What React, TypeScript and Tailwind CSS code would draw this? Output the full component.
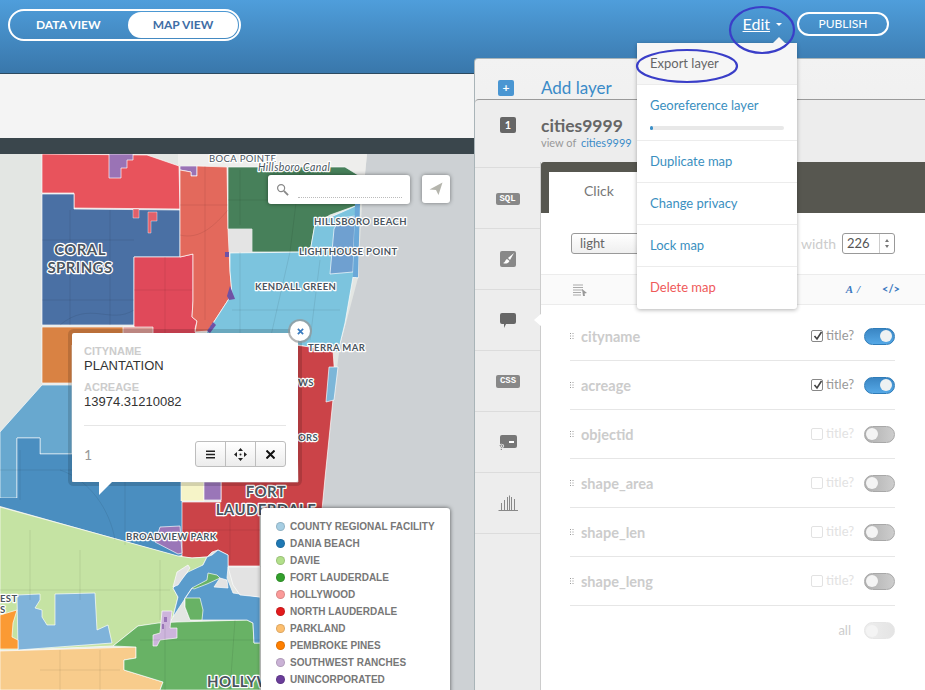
import React from "react";

const poly = (c: string, p: string, s = "#ffffffaa") => <polygon fill={c} points={p} stroke={s} strokeWidth={1} />;

function L({ x, y, s = 10, t, a = "start", i = false, w = 700 }: { x: number; y: number; s?: number; t: string; a?: "start" | "middle"; i?: boolean; w?: number }) {
  return (
    <text x={x} y={y} fontSize={s} textAnchor={a} fontStyle={i ? "italic" : "normal"} fontWeight={w} fill="#4a5560" stroke="#ffffff" strokeWidth={2.5} strokeLinejoin="round" className="[font-family:Lato,sans-serif] [paint-order:stroke] tracking-[0.4px]">
      {t}
    </text>
  );
}

function MapArt() {
  return (
    <svg viewBox="0 154 475 536" width={475} height={536} className="block">
      <rect x="0" y="154" width="475" height="536" fill="#e3e6e3" />
      <polygon fill="#cdd1d4" points="367,154 475,154 475,690 320,690 322,510 333,400 340,345 346,323 358,278 362,205" />
      <polygon fill="#eeeeec" points="178,154 367,154 362,205 340,167 228,167 178,165" />
      {poly("#e8535c", "42,154 147,155 179,166 180,209 74,208 74,193 42,193")}
      {poly("#9a73b5", "109,154 133,154 133,160 127,160 127,168 121,168 121,178 109,178")}
      {poly("#9a73b5", "180,166 197,166 197,176 191,176 191,172 180,170")}
      {poly("#4a70a4", "42,194 74,194 74,209 180,210 180,257 134,257 134,325 42,325")}
      {poly("#e0606a", "133,209 139,209 139,218 133,218", "#ffffff66")}
      {poly("#e0606a", "148,212 157,212 157,221 151,221 151,233 148,233", "#ffffff66")}
      {poly("#e0495a", "134,257 180,257 193,254 193,301 192,317 197,321 195,329 197,340 134,340")}
      {poly("#e3695c", "180,170 191,172 191,176 197,176 197,166 227,167 228,229 230,271 232,294 208,331 195,332 197,321 192,317 193,301 193,254 180,257")}
      {poly("#47805a", "228,167 345,167 358,175 358,205 330,215 315,224 310,252 252,252 252,229 228,229")}
      <rect x="229" y="229" width="23" height="23" fill="#e4e4e4" />
      {poly("#7cc4de", "230,253 310,252 315,224 358,205 358,278 353,277 345,323 338,352 298,345 200,340 208,331 232,294 230,271")}
      {poly("#6fa0d0", "334,229 340,218 355,216 353,272 330,274")}
      <polygon fill="#6aa8d8" points="355,204 360,204 358,277 353,277" />
      <polygon fill="#6f51a5" points="230,286 235,299 229,300 227,296" />
      <polygon fill="#6f51a5" points="207,331 213,322 216,325 210,333" />
      <rect x="225" y="252" width="4" height="5" fill="#6f51a5" />
      {poly("#d98243", "42,327 135,327 125,345 72,345 72,383 42,383")}
      {poly("#db9d97", "123,327 153,327 153,335 123,335")}
      {poly("#68a8cf", "0,432 42,385 72,385 72,454 40,454 40,438 17,438 17,498 0,498")}
      <polygon fill="#4a8ec0" points="17,438 40,438 40,454 72,454 72,482 182,482 182,555 178,556 0,506 0,498 17,498" />
      <path d="M17 438 H40 V454 H72 M17 438 V498" fill="none" stroke="#ffffff88" strokeWidth="1" />
      {poly("#cb4348", "295,345 333,350 335,380 325,478 322,510 260,510 260,566 228,566 228,555 218,550 212,552 207,557 192,558 182,557 182,502 221,502 221,482 298,482")}
      {poly("#7cb6d8", "329,367 338,367 334,400 326,402")}
      {poly("#f6f4c8", "181,482 204,482 204,501 181,501")}
      {poly("#9a76b8", "204,482 221,482 221,500 204,500")}
      {poly("#9a76b8", "155,542 160,527 180,526 182,553 178,554")}
      {poly("#c5e3a3", "0,507 178,556 192,558 207,557 203,565 173,588 178,597 173,617 170,622 138,626 113,646 18,650 0,650")}
      {poly("#7fb3da", "17,595 40,594 40,600 35,608 42,610 42,617 47,625 55,625 55,594 95,593 97,630 108,625 112,643 18,650")}
      {poly("#fb9a34", "0,615 17,610 13,623 12,637 18,640 18,649 0,649")}
      {poly("#f8cc8c", "0,651 136,647 136,658 124,660 124,670 163,682 160,690 0,690")}
      {poly("#68b265", "113,646 138,626 158,623 177,622 247,620 253,623 254,643 260,643 260,690 160,690 163,682 124,670 124,660 136,658 136,647")}
      {poly("#5a9ccc", "173,617 178,597 173,588 188,572 203,565 207,557 212,555 218,550 228,555 228,567 227,578 233,593 260,597 260,643 254,643 253,623 247,620 190,620 185,607 185,598 192,588")}
      {poly("#e3e3e3", "173,587 177,572 188,565 190,568 178,585")}
      {poly("#e3e3e3", "228,567 260,567 260,597 240,595 233,585")}
      {poly("#e3e3e3", "214,587 220,578 227,580 228,588")}
      {poly("#68b265", "192,588 207,580 208,573 217,575 220,578 207,584 194,589")}
      {poly("#68b265", "185,598 200,598 203,610 202,620 190,620 185,607")}
      {poly("#cdb5dc", "162,611 172,611 170,628 177,628 177,638 160,640 157,646 153,646 153,635 160,633")}
      <rect x="164" y="617" width="3" height="5" fill="#9a76b8" />
      <rect x="162" y="624" width="2" height="5" fill="#9a76b8" />
      <g fill="none" stroke="#00000014" strokeWidth="1">
        <path d="M42 240 H134 M70 210 V325 M110 210 V325 M42 300 H134 M60 325 C90 300 110 325 134 310" />
        <path d="M180 205 H228 M205 166 V320 M180 235 C200 240 215 225 228 210 M134 290 H192 M165 257 V340" />
        <path d="M240 170 V225 M228 200 H345 M300 170 L290 252 M290 252 L270 340 M240 252 V340 M232 310 H340 M320 260 L310 340" />
        <path d="M20 450 V500 M60 470 C90 480 110 510 115 540 M125 482 L125 545 M0 470 H170 M182 530 H260 M230 510 V560" />
        <path d="M30 530 V600 M80 550 V600 M0 590 H170 M160 560 V620 M40 670 H120 M60 650 V690 M100 650 V690" />
        <path d="M140 640 H260 M165 625 V690 M235 620 L230 690" />
      </g>
      <L x={209} y={162} t="BOCA POINTE" s={9.5} w={400} />
      <L x={258} y={171} t="Hillsboro Canal" s={10.5} i w={400} />
      <L x={314} y={225} t="HILLSBORO BEACH" s={9.5} />
      <L x={299} y={255} t="LIGHTHOUSE POINT" s={9.5} />
      <L x={255} y={290} t="KENDALL GREEN" s={9.5} />
      <L x={80} y={255} t="CORAL" s={15} a="middle" />
      <L x={80} y={273} t="SPRINGS" s={15} a="middle" />
      <L x={308} y={351} t="TERRA MAR" s={9.5} />
      <L x={298} y={386} t="WS" s={9.5} />
      <L x={298} y={441} t="ORS" s={9.5} />
      <L x={266} y={497} t="FORT" s={15} a="middle" />
      <L x={266} y={515} t="LAUDERDALE" s={15} a="middle" />
      <L x={126} y={540} t="BROADVIEW PARK" s={9.5} />
      <L x={0} y={602} t="EST" s={9.5} />
      <L x={0} y={613} t="S" s={9.5} />
      <L x={207} y={687} t="HOLLYW" s={15} />
    </svg>
  );
}

const legend: [string, string][] = [
  ["#a6cee3", "COUNTY REGIONAL FACILITY"],
  ["#1f78b4", "DANIA BEACH"],
  ["#b2df8a", "DAVIE"],
  ["#33a02c", "FORT LAUDERDALE"],
  ["#fb9a99", "HOLLYWOOD"],
  ["#e31a1c", "NORTH LAUDERDALE"],
  ["#fdbf6f", "PARKLAND"],
  ["#ff7f00", "PEMBROKE PINES"],
  ["#cab2d6", "SOUTHWEST RANCHES"],
  ["#6a3d9a", "UNINCORPORATED"],
];

const fields: [string, boolean][] = [
  ["cityname", true],
  ["acreage", true],
  ["objectid", false],
  ["shape_area", false],
  ["shape_len", false],
  ["shape_leng", false],
];

function Toggle({ on, faint = false }: { on: boolean; faint?: boolean }) {
  if (on) {
    return (
      <div className="flex h-[17px] w-[31px] items-center justify-end rounded-full border border-[#2f7cb8] bg-gradient-to-b from-[#3a86c4] to-[#55a8e6] pr-[2px]">
        <div className="h-[12px] w-[12px] rounded-full bg-[#eef1f2]" />
      </div>
    );
  }
  return (
    <div className={faint ? "flex h-[17px] w-[31px] items-center rounded-full border border-[#e6e6e6] bg-gradient-to-r from-[#eeeeee] to-[#e4e4e4] pl-[1px]" : "flex h-[17px] w-[31px] items-center rounded-full border border-[#a8a8a8] bg-gradient-to-r from-[#b0b0b0] to-[#cdcdcd] pl-[1px]"}>
      <div className="h-[12px] w-[12px] rounded-full bg-[#f4f4f4]" />
    </div>
  );
}

function Check({ on }: { on: boolean }) {
  return (
    <div className={on ? "relative h-[12px] w-[12px] rounded-[2px] border border-[#888888] bg-white" : "h-[12px] w-[12px] rounded-[2px] border border-[#e2e2e2] bg-white"}>
      {on && (
        <svg viewBox="0 0 12 12" className="absolute left-0 top-[-1px] h-[12px] w-[12px]">
          <path d="M2.5 6 L5 9 L9.5 2" fill="none" stroke="#444444" strokeWidth="1.6" />
        </svg>
      )}
    </div>
  );
}

function SideRow({ children, h = "h-[61px]" }: { children?: React.ReactNode; h?: string }) {
  return <div className={`${h} flex items-center justify-center border-b border-[#dcdcdc]`}>{children}</div>;
}

function Grip() {
  return (
    <svg viewBox="0 0 4 6" className="h-[6px] w-[4px]">
      <g fill="#999999">
        <rect x="0" y="0" width="1" height="1" /><rect x="2.5" y="0" width="1" height="1" />
        <rect x="0" y="2.5" width="1" height="1" /><rect x="2.5" y="2.5" width="1" height="1" />
        <rect x="0" y="5" width="1" height="1" /><rect x="2.5" y="5" width="1" height="1" />
      </g>
    </svg>
  );
}

function Menu({ t, tall = false, red = false, active = false, last = false }: { t: string; tall?: boolean; red?: boolean; active?: boolean; last?: boolean }) {
  const color = active ? "text-[#666666] bg-[#f6f6f6]" : red ? "text-[#ef5a5a]" : "text-[#3a8fc0]";
  return (
    <div className={`${tall ? "h-[56px]" : "h-[42px]"} ${last ? "" : "border-b border-[#ececec]"} ${color} px-[13px] pt-[12px] text-[13px] leading-[17px]`}>
      <div>{t}</div>
      {tall && (
        <div className="mt-[12px] h-[4px] w-[134px] rounded-full bg-[#e8e8e8]">
          <div className="h-[4px] w-[3px] rounded-full bg-[#3a8fc8]" />
        </div>
      )}
    </div>
  );
}

export default function App() {
  return (
    <div className="relative flex h-[690px] w-[925px] flex-col overflow-hidden bg-white [font-family:Lato,sans-serif]">
      <header className="flex h-[74px] items-start justify-between border-b border-[#2c4a60] bg-gradient-to-b from-[#4f9edb] to-[#3977ab] pl-[8px] pr-[36px] pt-[9px]">
        <div className="flex h-[32px] w-[233px] items-center rounded-full border-2 border-white pr-[1px]">
          <div className="w-[118px] pl-[26px] text-[12px] font-bold text-white">DATA VIEW</div>
          <div className="flex h-[26px] flex-1 items-center justify-center rounded-full bg-white text-[12px] font-bold text-[#3f6ea6]">MAP VIEW</div>
        </div>
        <div className="mt-[2px] flex items-center">
          <span className="mt-[1px] text-[16px] text-white underline">Edit</span>
          <span className="ml-[6px] mr-[15px] mt-[2px] h-0 w-0 border-x-[3px] border-t-[3px] border-x-transparent border-t-white" />
          <div className="flex h-[24px] w-[92px] items-center justify-center rounded-full border-2 border-white text-[12px] text-white">PUBLISH</div>
        </div>
      </header>
      <div className="h-[64px] bg-[#f4f4f4]" />
      <div className="h-[16px] bg-[#3a464c]" />
      <div className="relative flex-1">
        <MapArt />

        {/* search */}
        <div className="absolute left-[268px] top-[21px] flex h-[29px] w-[142px] items-center rounded-[3px] bg-white pl-[8px] shadow-[0_0_4px_rgba(0,0,0,0.45)]">
          <svg viewBox="0 0 14 14" className="h-[13px] w-[13px]">
            <circle cx="5.5" cy="5.5" r="3.8" fill="none" stroke="#888888" strokeWidth="1.3" />
            <path d="M8.5 8.5 L13 13" stroke="#888888" strokeWidth="2" />
          </svg>
          <div className="ml-[9px] mt-[15px] w-[104px] border-b border-dotted border-[#bbbbbb]" />
        </div>
        <div className="absolute left-[422px] top-[21px] flex h-[28px] w-[28px] items-center justify-center rounded-[3px] bg-white shadow-[0_0_4px_rgba(0,0,0,0.45)]">
          <svg viewBox="0 0 14 14" className="h-[14px] w-[14px]">
            <path d="M0.5 7.5 L13.5 0.5 L9.5 13 L7 8 Z" fill="#b5b5ad" />
          </svg>
        </div>

        {/* popup */}
        <div className="absolute left-[72px] top-[179px] h-[149px] w-[226px] rounded-[2px] bg-white px-[12px] pt-[12px] shadow-[0_0_0_4px_rgba(0,0,0,0.14)]">
          <div className="[font-family:'Liberation_Sans',sans-serif]">
            <div className="text-[11px] font-bold leading-[12px] text-[#cccccc]">CITYNAME</div>
            <div className="text-[13px] leading-[17px] text-[#333333]">PLANTATION</div>
            <div className="mt-[7px] text-[11px] font-bold leading-[12px] text-[#cccccc]">ACREAGE</div>
            <div className="mt-[1px] text-[13px] leading-[15px] text-[#333333]">13974.31210082</div>
          </div>
          <div className="mt-[16px] border-t border-[#e6e6e6]" />
          <div className="mt-[15px] flex items-center justify-between">
            <span className="text-[14px] text-[#999999]">1</span>
            <div className="flex h-[26px] w-[91px] rounded-[3px] border border-[#bdbdbd] bg-gradient-to-b from-white to-[#ececec]">
              <div className="flex flex-1 items-center justify-center border-r border-[#bdbdbd]">
                <svg viewBox="0 0 9 9" className="h-[9px] w-[9px]"><path d="M0 1.2 H9 M0 4.5 H9 M0 7.8 H9" stroke="#222222" strokeWidth="1.6" /></svg>
              </div>
              <div className="flex flex-1 items-center justify-center border-r border-[#bdbdbd]">
                <svg viewBox="0 0 13 13" className="h-[13px] w-[13px]"><path d="M6.5 0 L9 3 H4 Z M6.5 13 L9 10 H4 Z M0 6.5 L3 4 V9 Z M13 6.5 L10 4 V9 Z" fill="#222222" /><circle cx="6.5" cy="6.5" r="1" fill="#222222" /></svg>
              </div>
              <div className="flex flex-1 items-center justify-center">
                <svg viewBox="0 0 9 9" className="h-[9px] w-[9px]"><path d="M0.5 0.5 L8.5 8.5 M8.5 0.5 L0.5 8.5" stroke="#111111" strokeWidth="2" /></svg>
              </div>
            </div>
          </div>
          <svg viewBox="0 0 14 15" className="absolute left-[27px] top-[148px] h-[15px] w-[14px]">
            <path d="M0 0 H14 L0 14 Z" fill="#ffffff" />
          </svg>
        </div>
        <div className="absolute left-[290px] top-[167px] flex h-[20px] w-[20px] items-center justify-center rounded-full bg-white shadow-[0_0_0_2px_rgba(150,150,150,0.7)]">
          <svg viewBox="0 0 8 8" className="h-[7px] w-[7px]"><path d="M1 1 L7 7 M7 1 L1 7" stroke="#3a7cc0" strokeWidth="2" /></svg>
        </div>

        {/* legend */}
        <div className="absolute left-[261px] top-[354px] h-[190px] w-[189px] rounded-[3px] bg-white pl-[15px] pt-[10px] shadow-[0_0_4px_rgba(0,0,0,0.6)]">
          {legend.map(([c, t]) => (
            <div key={t} className="flex h-[17px] items-center">
              <span className="h-[9px] w-[9px] rounded-full border border-[#00000022]" style={{ backgroundColor: c }} />
              <span className="ml-[5px] [font-family:'Liberation_Sans',sans-serif] text-[10px] font-bold text-[#777777]">{t}</span>
            </div>
          ))}
        </div>
      </div>

      {/* right panel */}
      <div className="absolute bottom-0 left-[474px] top-[58px] flex w-[451px] flex-col rounded-tl-[4px] border-l border-t border-[#a9b4b8] bg-gradient-to-b from-[#f2f2f2] to-[#dcdcdc]">
        <div className="relative h-[40px]">
          <div className="absolute left-[23px] top-[21px] flex h-[16px] w-[16px] items-center justify-center rounded-[2px] bg-[#4a96d2] text-[12px] font-bold leading-none text-white">+</div>
          <div className="absolute left-[66px] top-[18px] text-[17px] leading-[22px] text-[#3a8bc8]">Add layer</div>
        </div>
        <div className="flex flex-1 flex-col overflow-hidden rounded-tl-[4px] border-t border-[#9a9a9a] bg-[#ededed]">
          <div className="flex h-[62px] shrink-0">
            <div className="flex w-[66px] shrink-0 justify-center pt-[17px]">
              <div className="flex h-[16px] w-[16px] items-center justify-center rounded-[2px] bg-[#666666] text-[11px] font-bold text-white">1</div>
            </div>
            <div className="pt-[16px]">
              <div className="text-[17.5px] font-bold leading-[20px] text-[#666666]">cities9999</div>
              <div className="text-[11px] leading-[13px] text-[#999999]">view of <span className="ml-[2px] text-[#3a8bc8]">cities9999</span></div>
            </div>
          </div>
          <div className="flex flex-1">
            <div className="w-[66px] shrink-0 border-r border-[#cccccc]">
              <SideRow h="h-[6px]" />
              <SideRow>
                <div className="mt-[2px] flex h-[12px] w-[24px] items-center justify-center rounded-[2px] bg-[#888888] [font-family:'Liberation_Mono',monospace] text-[9px] font-bold leading-none text-white">SQL</div>
              </SideRow>
              <SideRow>
                <svg viewBox="0 0 16 16" className="h-[16px] w-[16px]">
                  <rect width="16" height="16" rx="2" fill="#888888" />
                  <path d="M14 2 L8 7 L10 9 Z M7 8 L9.5 10 C8 13 5 13 3 12 C5 12 5 9 7 8 Z" fill="#ffffff" />
                </svg>
              </SideRow>
              <SideRow>
                <svg viewBox="0 0 16 16" className="h-[16px] w-[16px]">
                  <path d="M2 1 H14 A2 2 0 0 1 16 3 V10 A2 2 0 0 1 14 12 H6 L4 16 V12 H2 A2 2 0 0 1 0 10 V3 A2 2 0 0 1 2 1 Z" fill="#666666" />
                </svg>
              </SideRow>
              <SideRow>
                <div className="ml-[1px] flex h-[13px] w-[24px] items-center justify-center rounded-[2px] bg-[#888888] [font-family:'Liberation_Mono',monospace] text-[9px] font-bold leading-none text-white">CSS</div>
              </SideRow>
              <SideRow>
                <svg viewBox="0 0 18 15" className="h-[15px] w-[18px]">
                  <rect x="1" y="0" width="17" height="13" rx="2" fill="#777777" />
                  <rect x="10" y="6" width="5" height="2" fill="#ffffff" />
                  <path d="M0.8 11 C1 9.5 4 9.5 4 11 C4 12 2.3 12 2.3 13.2 M2.3 14 V15" fill="none" stroke="#ededed" strokeWidth="2.4" />
                  <path d="M0.8 11 C1 9.5 4 9.5 4 11 C4 12 2.3 12 2.3 13.2 M2.3 14 V15" fill="none" stroke="#777777" strokeWidth="1" />
                </svg>
              </SideRow>
              <SideRow>
                <svg viewBox="0 0 20 16" className="h-[16px] w-[20px]">
                  <path d="M0.5 15.5 H20 M3.5 15 V8 M6.5 15 V5 M9.5 15 V2 M11.5 15 V0.5 M13.5 15 V2 M16.5 15 V4" stroke="#888888" strokeWidth="1" fill="none" />
                </svg>
              </SideRow>
            </div>
            <div className="min-w-0 flex-1 bg-white">
              <div className="h-[51px] rounded-tl-[3px] bg-[#575750] pl-[8px] pt-[10px]">
                <div className="h-[41px] w-[110px] bg-white pl-[35px] pt-[10px] text-[14px] leading-[17px] text-[#777777]">Click</div>
              </div>
              <div className="flex h-[61px] items-center justify-between pl-[30px] pr-[30px]">
                <div className="flex h-[21px] w-[90px] items-center rounded-[3px] border border-[#999999] bg-gradient-to-b from-white to-[#efefef] pl-[8px] text-[13px] text-[#666666]">light</div>
                <div className="flex items-center">
                  <span className="mr-[6px] text-[14px] text-[#cccccc]">width</span>
                  <div className="flex h-[21px] w-[53px] rounded-[3px] border border-[#999999] text-[13px] text-[#555555]">
                    <div className="flex-1 pl-[4px] leading-[19px]">226</div>
                    <div className="flex w-[15px] flex-col items-center justify-center gap-[3px] border-l border-[#cccccc]">
                      <span className="h-0 w-0 border-x-[2px] border-b-[3px] border-x-transparent border-b-[#777777]" />
                      <span className="h-0 w-0 border-x-[2px] border-t-[3px] border-x-transparent border-t-[#777777]" />
                    </div>
                  </div>
                </div>
              </div>
              <div className="flex h-[31px] items-center justify-between border-y border-[#ececec] bg-[#fafafa] pl-[32px] pr-[25px]">
                <svg viewBox="0 0 14 12" className="h-[12px] w-[14px]">
                  <path d="M0 1 H10 M0 3.5 H10 M0 6 H10 M0 8.5 H8 M0 11 H8" stroke="#aaaaaa" strokeWidth="1" />
                  <path d="M9 5 L14 9 L11.5 9.5 L12 12 L10 12 Z" fill="#999999" />
                </svg>
                <div className="flex items-center gap-[22px] text-[11px] font-bold text-[#3a78c0]">
                  <span className="flex gap-[4px] [font-family:'Liberation_Serif',serif] italic">
                    <span>A</span>
                    <span>/</span>
                  </span>
                  <span>&lt;/&gt;</span>
                </div>
              </div>
              <div className="ml-[29px] mr-[30px] mt-[7px]">
                {fields.map(([n, on]) => (
                  <div key={n} className="flex h-[49px] items-center justify-between border-b border-[#e6e6e6]">
                    <div className="flex items-center">
                      <Grip />
                      <span className="ml-[7px] mt-[2px] text-[14.5px] font-bold text-[#cccccc]">{n}</span>
                    </div>
                    <div className="flex items-center">
                      <Check on={on} />
                      <span className={`ml-[3px] mr-[10px] text-[13px] ${on ? "text-[#999999]" : "text-[#e2e2e2]"}`}>title?</span>
                      <Toggle on={on} />
                    </div>
                  </div>
                ))}
                <div className="flex h-[49px] items-center justify-end">
                  <span className="mr-[13px] text-[13px] text-[#cccccc]">all</span>
                  <Toggle on={false} faint />
                </div>
              </div>
            </div>
          </div>
        </div>
      </div>

      {/* sidebar pointer */}
      <svg viewBox="0 0 8 14" className="absolute left-[534px] top-[313px] h-[14px] w-[8px]">
        <path d="M8 0 L0 7 L8 14 Z" fill="#ffffff" />
      </svg>

      {/* dropdown */}
      <div className="absolute left-[637px] top-[43px] w-[160px] rounded-[3px] bg-white shadow-[0_1px_4px_rgba(0,0,0,0.3)]">
        <svg viewBox="0 0 12 6" className="absolute left-[136px] top-[-6px] h-[6px] w-[12px]"><path d="M0 6 L6 0 L12 6 Z" fill="#f6f6f6" /></svg>
        <Menu t="Export layer" active />
        <Menu t="Georeference layer" tall />
        <Menu t="Duplicate map" />
        <Menu t="Change privacy" />
        <Menu t="Lock map" />
        <Menu t="Delete map" red last />
      </div>

      {/* hand-drawn annotation */}
      <svg viewBox="0 0 925 690" className="pointer-events-none absolute left-0 top-0 h-[690px] w-[925px]">
        <g fill="none" stroke="#3a3ec8" strokeWidth="2.2">
          <ellipse cx="762" cy="30" rx="32" ry="23" />
          <ellipse cx="687" cy="66" rx="50" ry="16" />
        </g>
      </svg>
    </div>
  );
}
